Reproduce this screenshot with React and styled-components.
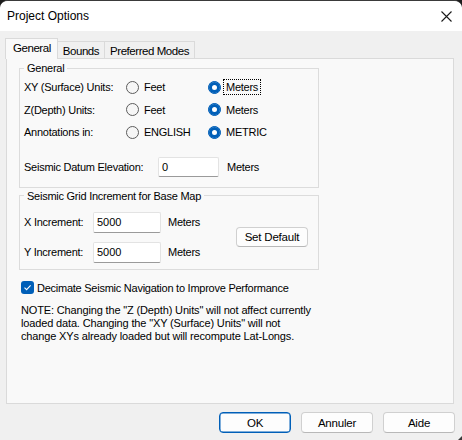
import React from "react";
import styled, { createGlobalStyle } from "styled-components";

const Global = createGlobalStyle`
  html, body { margin: 0; padding: 0; background: #1c1c1c; }
  body { font-family: "Liberation Sans", Arial, sans-serif; font-size: 11px; color: #000; }
  * { box-sizing: border-box; }
`;

const Window = styled.div`
  width: 462px;
  height: 440px;
  display: flex;
  flex-direction: column;
  background: #f0f0f0;
  border-top: 1px solid #3a3a3a;
  border-radius: 8px 8px 0 0;
  overflow: hidden;
  position: relative;
`;

const TitleBar = styled.div`
  height: 30px;
  flex: none;
  background: #ffffff;
  display: flex;
  align-items: center;
  justify-content: space-between;
  padding: 0 10px 0 7px;
`;

const Title = styled.span`
  font-size: 12px;
  color: #000;
`;

const CloseIcon = () => (
  <svg width="11" height="11" viewBox="0 0 11 11">
    <path d="M0.5 0.5 L10.5 10.5 M10.5 0.5 L0.5 10.5" stroke="#1a1a1a" strokeWidth="1.1" fill="none" />
  </svg>
);

const Body = styled.div`
  flex: 1;
  display: flex;
  flex-direction: column;
  padding: 7px 8px 7px 6px;
`;

const TabRow = styled.div`
  display: flex;
  align-items: flex-start;
  height: 20px;
`;

const Tab = styled.div`
  position: relative;
  height: ${(p) => (p.$active ? "21px" : "17px")};
  margin-top: ${(p) => (p.$active ? "0" : "3px")};
  margin-left: -1px;
  padding: ${(p) => (p.$active ? "3px 6px 0 7px" : "3px 5px 0 5px")};
  background: ${(p) => (p.$active ? "#f9f9f9" : "#f0f0f0")};
  border: 1px solid #dadada;
  border-bottom: none;
  font-size: 11.5px;
  letter-spacing: -0.45px;
  line-height: 13px;
  white-space: nowrap;
  z-index: ${(p) => (p.$active ? 2 : 1)};
`;

const Panel = styled.div`
  height: 346px;
  background: #f9f9f9;
  border: 1px solid #dadada;
  padding: 2px 12px 0 12px;
  display: flex;
  flex-direction: column;
  align-items: flex-start;
`;

const Group = styled.fieldset`
  width: 300px;
  margin: ${(p) => p.$mt || "0"} 0 0 0;
  border: 1px solid #dcdcdc;
  padding: ${(p) => p.$pad || "1px 4px 9px 4px"};
  min-width: 0;
`;

const Legend = styled.legend`
  padding: 0 3px;
  line-height: 14px;
  letter-spacing: -0.25px;
`;

const OptionGrid = styled.div`
  display: grid;
  grid-template-columns: 102px 82px auto;
  grid-auto-rows: 22.5px;
  align-items: center;
`;

const Label = styled.span`
  letter-spacing: -0.25px;
  white-space: nowrap;
`;

const Radio = styled.label`
  display: flex;
  align-items: center;
  gap: 5px;
  letter-spacing: -0.25px;
  white-space: nowrap;
`;

const RadioCircle = styled.span`
  width: 13px;
  height: 13px;
  border-radius: 50%;
  flex: none;
  ${(p) =>
    p.$on
      ? `background: #005fb8; border: 1px solid #005fb8; box-shadow: inset 0 0 0 3px #005fb8, inset 0 0 0 6px #ffffff;`
      : `background: #f6f6f6; border: 1px solid #5c5c5c;`}
`;

const FocusText = styled.span`
  outline: 1px dotted #000;
  outline-offset: 1px;
  padding: 0 1px;
  margin-left: -1px;
`;

const FieldRow = styled.div`
  display: flex;
  align-items: center;
  height: ${(p) => p.$h || "21px"};
  margin-top: ${(p) => p.$mt || "0"};
`;

const FieldLabel = styled.span`
  width: ${(p) => p.$w};
  flex: none;
  letter-spacing: -0.25px;
  white-space: nowrap;
`;

const Input = styled.div`
  width: ${(p) => p.$w};
  height: ${(p) => p.$h || "21px"};
  background: #ffffff;
  border: 1px solid #e3e3e3;
  border-bottom-color: #9a9a9a;
  border-radius: 2px;
  padding: 2px 0 0 3px;
  line-height: 14px;
  flex: none;
  margin-right: ${(p) => p.$gap};
`;

const GridBlock = styled.div`
  display: flex;
  align-items: center;
`;

const FieldCol = styled.div`
  display: flex;
  flex-direction: column;
  gap: 9px;
  width: 212px;
`;

const Button = styled.button`
  width: 72px;
  height: ${(p) => p.$h || "21px"};
  background: #fdfdfd;
  border: 1px solid ${(p) => (p.$primary ? "#005fb8" : "#d0d0d0")};
  box-shadow: ${(p) => (p.$primary ? "inset 0 0 0 0.5px #005fb8" : "none")};
  border-bottom-color: ${(p) => (p.$primary ? "#005fb8" : "#b8b8b8")};
  border-radius: 4px;
  font-family: "Liberation Sans", Arial, sans-serif;
  font-size: 11.5px;
  color: #000;
  padding: 0;
  letter-spacing: -0.2px;
`;

const CheckRow = styled.label`
  display: flex;
  align-items: center;
  gap: 3px;
  margin: 11px 0 0 2px;
  height: 14px;
  letter-spacing: -0.25px;
  white-space: nowrap;
`;

const CheckBox = styled.span`
  width: 13px;
  height: 13px;
  border-radius: 3px;
  background: #005fb8;
  display: flex;
  align-items: center;
  justify-content: center;
  flex: none;
`;

const Note = styled.p`
  margin: 9px 0 0 2px;
  line-height: 13px;
  letter-spacing: -0.15px;
  white-space: nowrap;
`;

const ButtonRow = styled.div`
  display: flex;
  justify-content: flex-end;
  gap: 10px;
  margin-top: 8px;
  margin-right: -1px;
`;

const Grip = styled.svg`
  position: absolute;
  right: 0;
  bottom: 0;
`;

function RadioOption({ on, children }) {
  return (
    <Radio>
      <RadioCircle $on={on} />
      {children}
    </Radio>
  );
}

export default function App() {
  return (
    <>
      <Global />
      <Window>
        <TitleBar>
          <Title>Project Options</Title>
          <CloseIcon />
        </TitleBar>
        <Body>
          <TabRow>
            <Tab $active>General</Tab>
            <Tab>Bounds</Tab>
            <Tab>Preferred Modes</Tab>
          </TabRow>
          <Panel>
            <Group $pad="1px 4px 10px 4px">
              <Legend>General</Legend>
              <OptionGrid>
                <Label>XY (Surface) Units:</Label>
                <RadioOption>Feet</RadioOption>
                <RadioOption on>
                  <FocusText>Meters</FocusText>
                </RadioOption>
                <Label>Z(Depth) Units:</Label>
                <RadioOption>Feet</RadioOption>
                <RadioOption on>Meters</RadioOption>
                <Label>Annotations in:</Label>
                <RadioOption>ENGLISH</RadioOption>
                <RadioOption on>METRIC</RadioOption>
              </OptionGrid>
              <FieldRow $h="20px" $mt="13px">
                <FieldLabel $w="134px">Seismic Datum Elevation:</FieldLabel>
                <Input $w="61px" $h="20px" $gap="8px">0</Input>
                <Label>Meters</Label>
              </FieldRow>
            </Group>
            <Group $mt="1px" $pad="9px 4px 6px 4px">
              <Legend>Seismic Grid Increment for Base Map</Legend>
              <GridBlock>
                <FieldCol>
                  <FieldRow>
                    <FieldLabel $w="69px">X Increment:</FieldLabel>
                    <Input $w="68px" $gap="7px">5000</Input>
                    <Label>Meters</Label>
                  </FieldRow>
                  <FieldRow>
                    <FieldLabel $w="69px">Y Increment:</FieldLabel>
                    <Input $w="68px" $gap="7px">5000</Input>
                    <Label>Meters</Label>
                  </FieldRow>
                </FieldCol>
                <Button $h="20px">Set Default</Button>
              </GridBlock>
            </Group>
            <CheckRow>
              <CheckBox>
                <svg width="9" height="9" viewBox="0 0 9 9">
                  <path d="M1.5 4.6 L3.6 6.6 L7.6 2.4" stroke="#ffffff" strokeWidth="1.1" fill="none" />
                </svg>
              </CheckBox>
              Decimate Seismic Navigation to Improve Performance
            </CheckRow>
            <Note>
              NOTE: Changing the "Z (Depth) Units" will not affect currently
              <br />
              loaded data. Changing the "XY (Surface) Units" will not
              <br />
              change XYs already loaded but will recompute Lat-Longs.
            </Note>
          </Panel>
          <ButtonRow>
            <Button $primary>OK</Button>
            <Button>Annuler</Button>
            <Button>Aide</Button>
          </ButtonRow>
        </Body>
        <Grip width="4" height="4" viewBox="0 0 4 4">
          <path d="M4 0 L4 4 L0 4 Z" fill="#3a3a3a" />
        </Grip>
      </Window>
    </>
  );
}
